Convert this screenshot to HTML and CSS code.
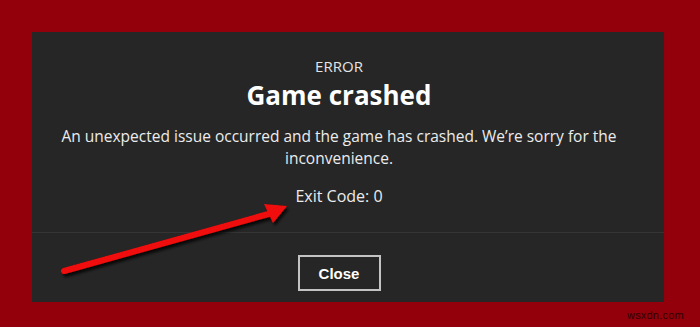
FILE: index.html
```html
<!DOCTYPE html>
<html>
<head>
<meta charset="utf-8">
<link rel="stylesheet" href="styles.css">
</head>
<body>
<div class="stage">
  <div class="dialog">
    <div class="content">
      <div class="kicker">ERROR</div>
      <h1 class="title">Game crashed</h1>
      <p class="message">An unexpected issue occurred and the game has crashed. We’re sorry for the inconvenience.</p>
      <p class="code">Exit Code: 0</p>
    </div>
    <div class="footer">
      <button class="close-btn">Close</button>
    </div>
  </div>
  <svg class="arrow" width="700" height="327" viewBox="0 0 700 327">
    <defs>
      <filter id="sh" x="-20%" y="-50%" width="140%" height="200%">
        <feGaussianBlur in="SourceAlpha" stdDeviation="1.6"/>
        <feOffset dx="1.5" dy="2.5" result="b"/>
        <feComponentTransfer><feFuncA type="linear" slope="0.8"/></feComponentTransfer>
        <feMerge><feMergeNode/><feMergeNode in="SourceGraphic"/></feMerge>
      </filter>
    </defs>
    <g filter="url(#sh)">
      <line x1="64" y1="271" x2="272" y2="213" stroke="#f00a0a" stroke-width="6" stroke-linecap="round"/>
      <polygon points="287,206 264,204 273,223" fill="#f00a0a"/>
    </g>
  </svg>
  <div class="watermark">wsxdn.com</div>
</div>
</body>
</html>
```
FILE: styles.css
```css
html, body {
  margin: 0;
  padding: 0;
}
body {
  width: 700px;
  height: 327px;
  background: #93000b;
  overflow: hidden;
  font-family: "Open Sans", "Liberation Sans", sans-serif;
}
.stage {
  position: relative;
  width: 700px;
  height: 327px;
  padding: 32px 36px 25px 32px;
  box-sizing: border-box;
}
.dialog {
  background: #262626;
  height: 270px;
  display: flex;
  flex-direction: column;
}
.content {
  height: 201px;
  box-sizing: border-box;
  padding: 24px 38px 0 20px;
  text-align: center;
  border-bottom: 1px solid #353535;
}
.kicker {
  color: #e4e4e4;
  font-size: 15px;
  line-height: 21px;
}
.title {
  margin: 0;
  color: #ffffff;
  font-size: 26px;
  font-weight: 700;
  line-height: 36px;
}
.message {
  margin: 12px 0 0;
  color: #ececec;
  font-size: 15.5px;
  line-height: 22px;
}
.code {
  margin: 16px 0 0;
  color: #ececec;
  font-size: 16px;
  line-height: 22px;
}
.footer {
  flex: 1;
  display: flex;
  justify-content: center;
  padding: 22px 18px 0 0;
  box-sizing: border-box;
}
.close-btn {
  width: 83px;
  height: 36px;
  background: transparent;
  border: 2px solid #c4c4c4;
  color: #ffffff;
  font-family: "Liberation Sans", Arial, sans-serif;
  font-weight: 700;
  font-size: 15px;
  padding: 0;
}
.arrow {
  position: absolute;
  left: 0;
  top: 0;
}
.watermark {
  position: absolute;
  left: 627px;
  top: 309px;
  font-family: "Liberation Sans", sans-serif;
  font-size: 11px;
  color: #2b0004;
  letter-spacing: 0.2px;
}
```
